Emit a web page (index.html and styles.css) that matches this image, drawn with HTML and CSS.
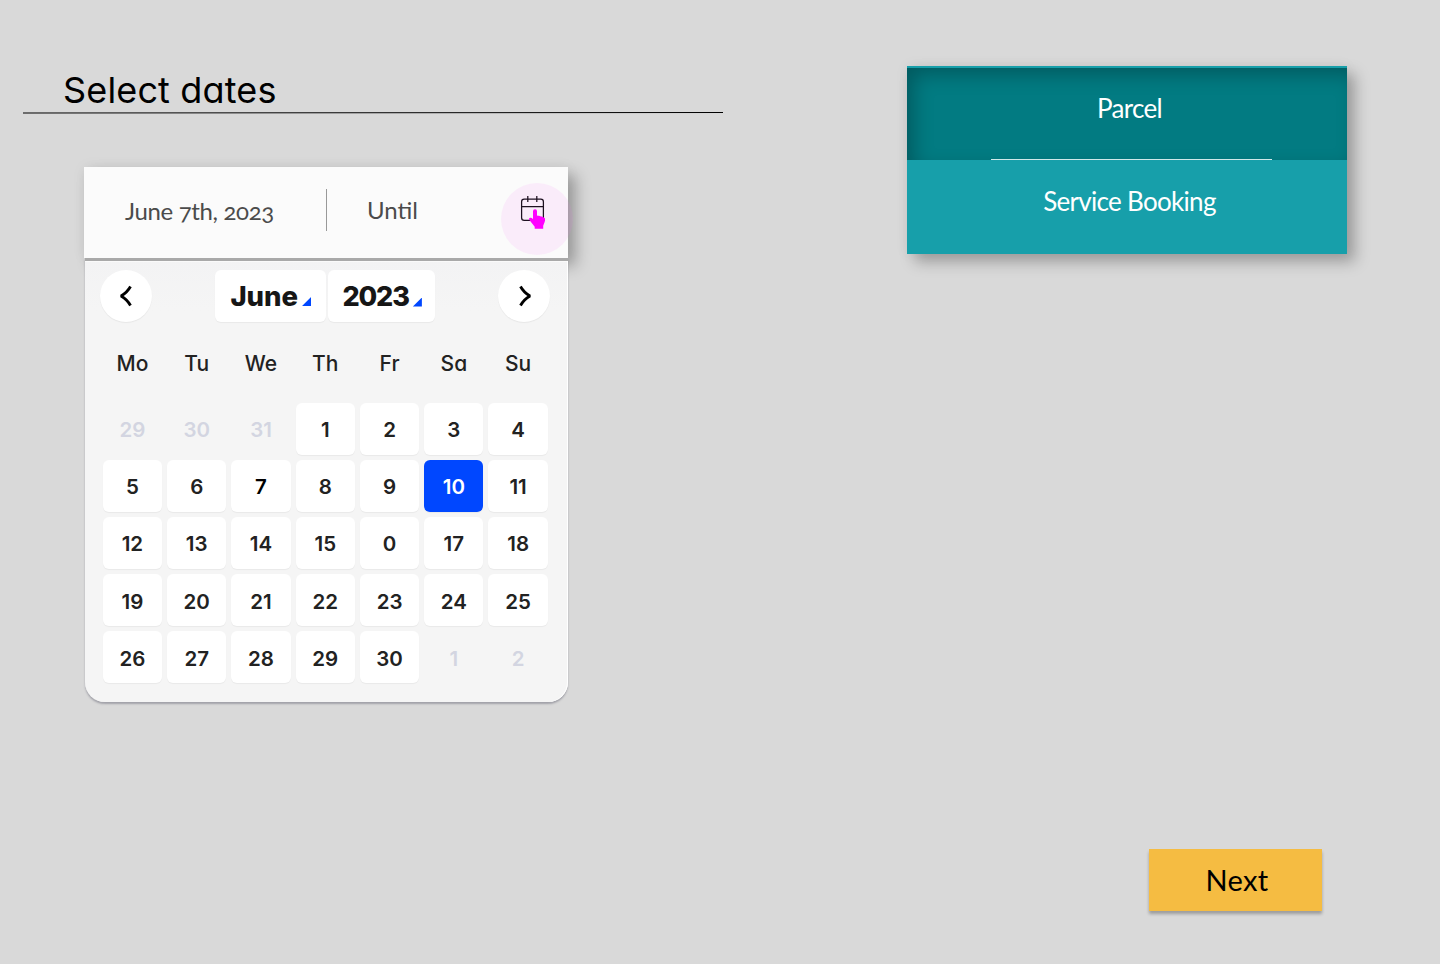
FILE: index.html
```html
<!DOCTYPE html>
<html lang="en">
<head>
<meta charset="utf-8">
<title>Select dates</title>
<link rel="stylesheet" href="styles.css">
</head>
<body>
<main class="page">
  <section class="dates">
    <h1 class="title"><span class="title-text">Select dates</span></h1>
    <svg class="rule" width="700" height="3" viewBox="0 0 700 3"><path d="M0 2L700 1.5" stroke="#000"/></svg>
    <div class="picker">
      <div class="range">
        <span class="from">June 7th, 2023</span>
        <span class="divider"></span>
        <span class="until">Until</span>
        <span class="halo"></span>
        <svg class="cal-icon" width="32" height="38" viewBox="0 0 32 38">
          <g fill="none" stroke="#1d1020" stroke-width="1.25"><rect x="4.6" y="5.2" width="21.8" height="21.2" rx="2.6"/><path d="M4.6 12.7H26.4M10.8 2V8M19.800 2V8"/></g>
          <path fill="#f0f" d="M16 17.2a2 2 0 0 1 4 0V21.5C22 21.7 27.6 23.1 28 24.6 28.5 27.5 27 29.5 26.2 31.8V34.8H17.7V32.8L12.6 26.3C10.8 23.7 13.7 22.5 16 25Z"/>
        </svg>
      </div>
      <div class="calendar">
        <div class="bar">
          <button class="nav"><svg width="14" height="22" viewBox="0 0 14 22"><path d="M11.500 1.500C9 6 6.500 8.500 2 11 6.500 13.500 9 16 11.500 20.500"/></svg></button>
          <div class="selects">
            <button class="select month"><span>June</span><i class="corner"></i></button>
            <button class="select year"><span>2023</span><i class="corner"></i></button>
          </div>
          <button class="nav"><svg width="14" height="22" viewBox="0 0 14 22"><path d="M3.500 1.500C6 6 8.500 8.500 13 11 8.500 13.500 6 16 3.500 20.500"/></svg></button>
        </div>
        <div class="week"><span>Mo</span><span>Tu</span><span>We</span><span>Th</span><span>Fr</span><span>Sa</span><span>Su</span></div>
        <div class="days">
          <span class="out">29</span><span class="out">30</span><span class="out">31</span><span class="day">1</span><span class="day">2</span><span class="day">3</span><span class="day">4</span>
          <span class="day">5</span><span class="day">6</span><span class="day today">7</span><span class="day">8</span><span class="day">9</span><span class="day selected">10</span><span class="day">11</span>
          <span class="day">12</span><span class="day">13</span><span class="day">14</span><span class="day">15</span><span class="day">0</span><span class="day">17</span><span class="day">18</span>
          <span class="day">19</span><span class="day">20</span><span class="day">21</span><span class="day">22</span><span class="day">23</span><span class="day">24</span><span class="day">25</span>
          <span class="day">26</span><span class="day">27</span><span class="day">28</span><span class="day">29</span><span class="day">30</span><span class="out">1</span><span class="out">2</span>
        </div>
      </div>
    </div>
  </section>
  <aside class="side">
    <nav class="menu">
      <a class="item active"><span class="parcel">Parcel</span></a>
      <a class="item"><span class="booking">Service Booking</span></a>
    </nav>
    <button class="next"><span>Next</span></button>
  </aside>
</main>
</body>
</html>
```
FILE: styles.css
```css
* { box-sizing: border-box; }
body { margin: 0; background: #d9d9d9; }
button { border: 0; padding: 0; margin: 0; }
.page { width: 1440px; height: 964px; display: flex; overflow: hidden; font-family: Inter, "Liberation Sans", sans-serif; font-feature-settings: "cv11"; }

.dates { width: 723px; padding: 66px 0 0 23px; }
.title { margin: 0; padding-left: 40px; height: 45px; line-height: 48px; font-size: 36px; font-weight: 440; color: #000; white-space: nowrap; }
.title-text { letter-spacing: 0.15px; }
.rule { display: block; }

.picker { width: 484px; margin: 53px 0 0 61px; }
.range { position: relative; height: 91px; display: flex; background: #fbfbfb; color: #4b4b4b; font-family: Lato, "Open Sans", sans-serif; font-size: 24px; line-height: 30px; box-shadow: 8px 8px 14px rgba(0,0,0,.28), 0 0 14px rgba(0,0,0,.05); }
.from { width: 242px; padding: 29px 0 0 41px; font-variant-numeric: oldstyle-nums; letter-spacing: -0.35px; white-space: nowrap; }
.divider { width: 1px; height: 42px; margin-top: 22px; background: #999; }
.until { padding: 28px 0 0 40px; }
.halo { position: absolute; left: 417px; top: 16px; width: 72px; height: 72px; border-radius: 50%; background: rgba(245,120,245,.11); }
.cal-icon { position: absolute; left: 433px; top: 27px; }

.calendar { position: relative; height: 443.5px; margin-left: 1px; padding: 7.500px 0 0 15.400px; border-top: 3px solid #a9a9a9; border-radius: 0 0 20px 20px; background: linear-gradient(#f3f3f4, #f5f5f5 50px); box-shadow: 0 2px 2px rgba(60,60,80,.35), inset -1px 0 #fff, inset 0 1px #fafafa; }
.bar { width: 450px; margin-top: 1px; display: flex; justify-content: space-between; }
.nav { width: 52px; height: 52px; border-radius: 50%; background: #fff; display: flex; align-items: center; justify-content: center; box-shadow: 0 1px 1px rgba(0,0,0,.06); }
.nav path { fill: none; stroke: #000; stroke-width: 2.8; stroke-linejoin: bevel; }
.selects { display: flex; gap: 2px; }
.select { height: 52px; display: flex; align-items: center; border-radius: 6px; background: #fff; color: #161616; font: 800 27.500px Inter, sans-serif; box-shadow: 0 1px 1px rgba(0,0,0,.05); }
.month { width: 111px; padding-left: 15px; }
.year { width: 107px; padding: 1px 0 0 14px; font-size: 27px; letter-spacing: -1.1px; }
.corner { width: 9px; height: 9px; margin: 12px 0 0 4px; background: #0047ff; clip-path: polygon(100% 0, 100% 100%, 0 100%); }
.week { display: grid; grid-template-columns: repeat(7, 1fr); column-gap: 5px; width: 445px; margin: 28.500px 0 0 2.400px; height: 28px; line-height: 28px; text-align: center; font-size: 21px; font-weight: 550; color: #222; }
.days { display: grid; grid-template: repeat(5, 1fr) / repeat(7, 1fr); gap: 4.800px 5px; width: 445px; height: 281px; margin: 24.500px 0 0 2.400px; font-size: 20.500px; font-weight: 600; color: #222; }
.days span { display: flex; align-items: center; justify-content: center; border-radius: 6px; padding-top: 2px; }
.day { background: #fff; box-shadow: 0 1px 1px rgba(0,0,0,.05); }
.today { color: #000; }
.days .selected { background: #0047ff; color: #fff; }
.out { color: #d3d5e1; }

.side { width: 717px; padding: 66px 93px 0 184px; }
.menu { display: block; height: 188px; border-top: 2px solid #179faa; background: #179faa; color: #fff; font: 26px/32px Lato, sans-serif; letter-spacing: -0.7px; box-shadow: 8px 8px 14px rgba(0,0,0,.27), 0 0 14px rgba(0,0,0,.05); }
.item { display: block; height: 94px; padding: 25px 0 0 5px; text-align: center; }
.active { height: 92px; padding-top: 24px; background: linear-gradient(#d9f3f3, #d9f3f3) 84px 91px / 281px 1px no-repeat, #027b82; box-shadow: inset 8px 8px 20px -2px rgba(0,0,0,.28); }
.next { display: block; width: 173px; height: 62px; margin: 595px 0 0 242px; padding: 0 0 2px 3px; background: #f5bc42; color: #000; font: 29px Lato, sans-serif; letter-spacing: 0.3px; box-shadow: 0 3px 3px rgba(0,0,0,.28); }
```
